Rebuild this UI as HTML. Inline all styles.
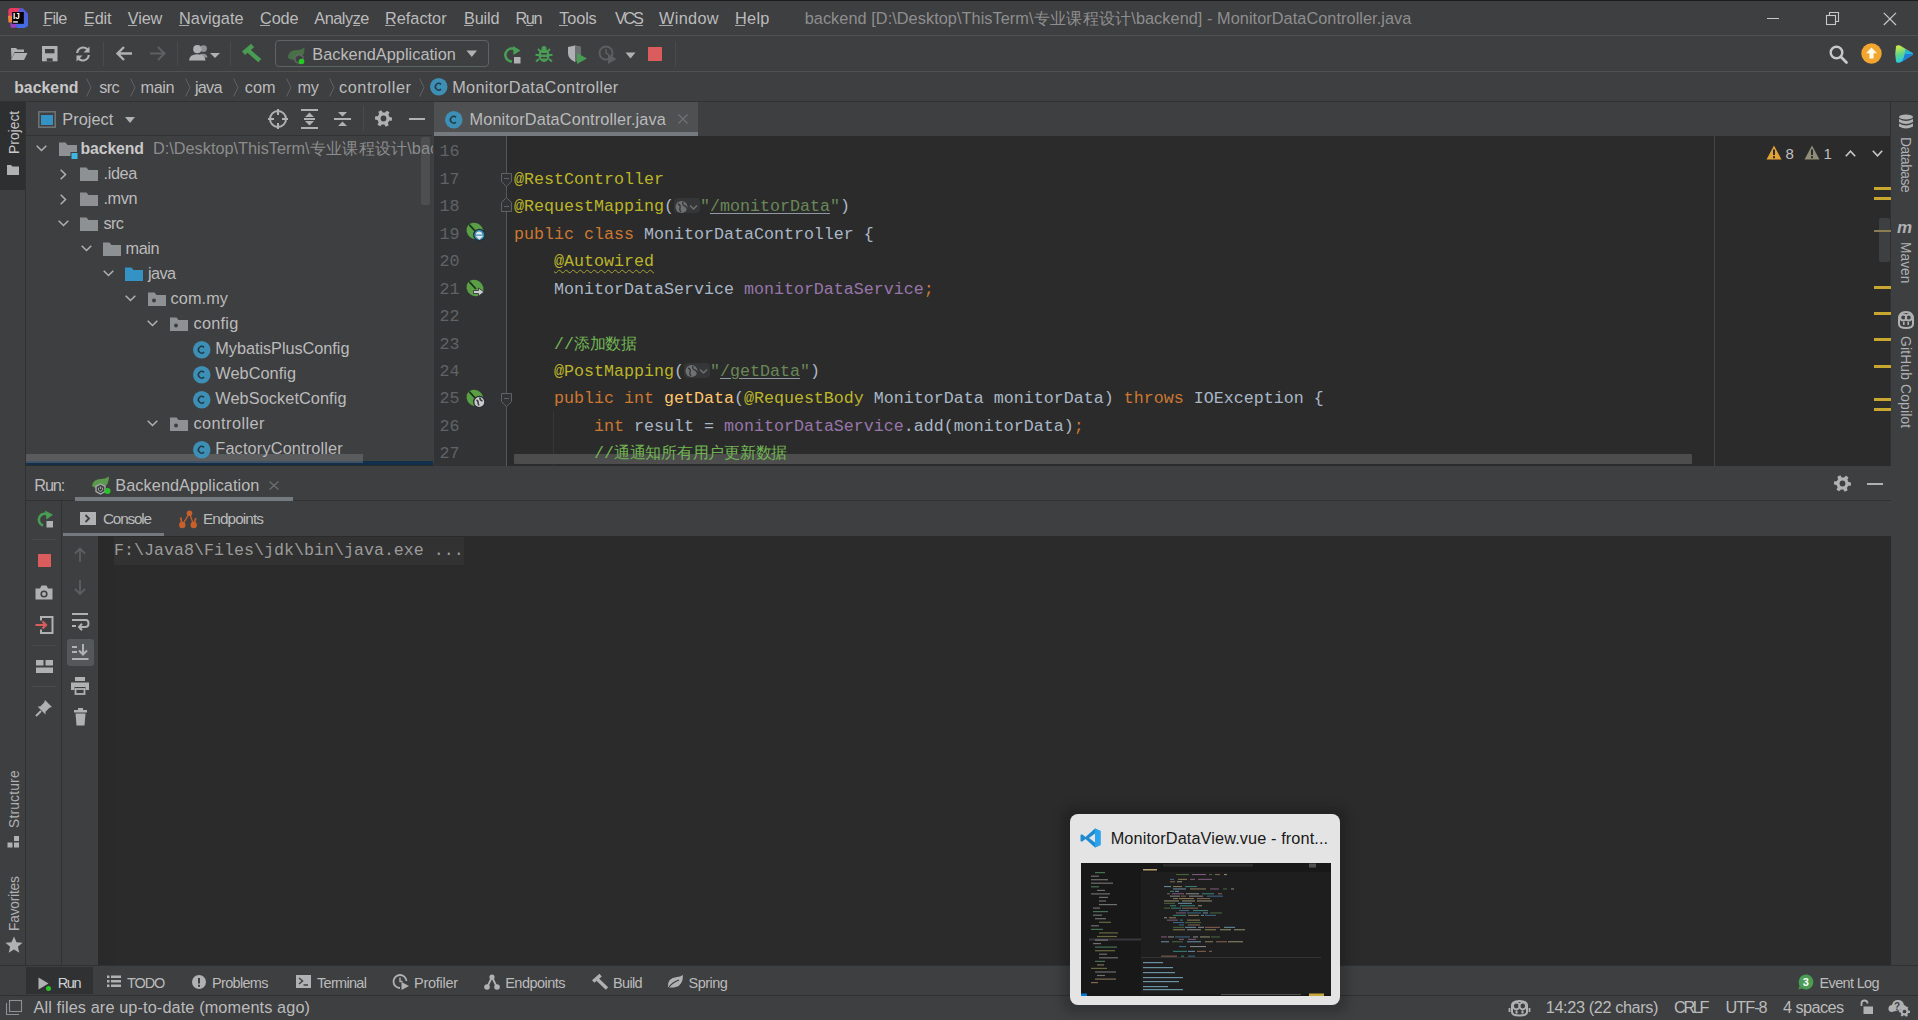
<!DOCTYPE html>
<html><head><meta charset="utf-8">
<style>
*{margin:0;padding:0;box-sizing:border-box}
html,body{width:1918px;height:1020px;overflow:hidden;background:#3e3f41;font-family:"Liberation Sans",sans-serif;color:#bbbbbb;position:relative}
.a{position:absolute}
.t{position:absolute;white-space:nowrap}
.cj{display:inline-block;text-align:center;letter-spacing:0;text-indent:0}
svg{position:absolute;overflow:visible}
</style></head><body>
<div class="a" style="left:0px;top:0px;width:1918px;height:1020px;background:#3e3f41;"></div>
<div class="a" style="left:0px;top:0px;width:1918px;height:1px;background:#1c1c1c;"></div>
<div class="a" style="left:0px;top:35px;width:1918px;height:1px;background:#515151;"></div>
<div class="a" style="left:0px;top:71px;width:1918px;height:1px;background:#515151;"></div>
<div class="a" style="left:0px;top:101px;width:1918px;height:1px;background:#323232;"></div>
<svg style="left:7px;top:7px" width="22" height="22" viewBox="0 0 22 22">
<defs><linearGradient id="ijb" x1="0" y1="0" x2="0" y2="1"><stop offset="0" stop-color="#5b58d8"/><stop offset="1" stop-color="#3f6fe6"/></linearGradient></defs>
<path d="M1.3 3 Q1.8 1 4 1 L12.5 1 L14.5 4.5 L6 12 L1.3 10.5 Z" fill="#e83a62"/>
<path d="M12.5 1.5 L15.5 1 L21 6.5 L21 19 L17.5 21 L10 21 L7 16 Z" fill="url(#ijb)"/>
<path d="M1 9 L5 8.5 L5.5 15.5 L1.5 15.5 Z" fill="#f0853a"/>
<path d="M3 16.5 L9 16 L9.5 20.5 L4 21 Z" fill="#9b3fc2"/>
<rect x="5.2" y="5" width="11.6" height="11.8" fill="#000"/>
<text x="5.9" y="12.1" font-family="Liberation Sans" font-weight="bold" font-size="8.2" fill="#fff">IJ</text>
<rect x="6.1" y="14.2" width="4.8" height="1.5" fill="#ddd"/>
</svg>
<div class="t" style="left:43.20px;top:8.25px;font-size:16.30px;line-height:21px;color:#bbbbbb;font-family:'Liberation Sans',sans-serif;letter-spacing:-0.689px;">File</div>
<div class="a" style="left:43.2px;top:25px;width:7.8px;height:1px;background:#a8a8a8;"></div>
<div class="t" style="left:84.00px;top:8.25px;font-size:16.30px;line-height:21px;color:#bbbbbb;font-family:'Liberation Sans',sans-serif;letter-spacing:-0.163px;">Edit</div>
<div class="a" style="left:84.0px;top:25px;width:9.1px;height:1px;background:#a8a8a8;"></div>
<div class="t" style="left:127.80px;top:8.25px;font-size:16.30px;line-height:21px;color:#bbbbbb;font-family:'Liberation Sans',sans-serif;letter-spacing:-0.144px;">View</div>
<div class="a" style="left:127.8px;top:25px;width:9.1px;height:1px;background:#a8a8a8;"></div>
<div class="t" style="left:179.00px;top:8.25px;font-size:16.30px;line-height:21px;color:#bbbbbb;font-family:'Liberation Sans',sans-serif;letter-spacing:0.038px;">Navigate</div>
<div class="a" style="left:179.0px;top:25px;width:10.0px;height:1px;background:#a8a8a8;"></div>
<div class="t" style="left:260.00px;top:8.25px;font-size:16.30px;line-height:21px;color:#bbbbbb;font-family:'Liberation Sans',sans-serif;letter-spacing:-0.123px;">Code</div>
<div class="a" style="left:260.0px;top:25px;width:9.9px;height:1px;background:#a8a8a8;"></div>
<div class="t" style="left:314.30px;top:8.25px;font-size:16.30px;line-height:21px;color:#bbbbbb;font-family:'Liberation Sans',sans-serif;letter-spacing:-0.465px;">Analyze</div>
<div class="a" style="left:353.1px;top:25px;width:6.6px;height:1px;background:#a8a8a8;"></div>
<div class="t" style="left:384.90px;top:8.25px;font-size:16.30px;line-height:21px;color:#bbbbbb;font-family:'Liberation Sans',sans-serif;letter-spacing:0.028px;">Refactor</div>
<div class="a" style="left:384.9px;top:25px;width:10.0px;height:1px;background:#a8a8a8;"></div>
<div class="t" style="left:463.90px;top:8.25px;font-size:16.30px;line-height:21px;color:#bbbbbb;font-family:'Liberation Sans',sans-serif;letter-spacing:-0.112px;">Build</div>
<div class="a" style="left:463.9px;top:25px;width:9.1px;height:1px;background:#a8a8a8;"></div>
<div class="t" style="left:515.40px;top:8.25px;font-size:16.30px;line-height:21px;color:#bbbbbb;font-family:'Liberation Sans',sans-serif;letter-spacing:-1.401px;">Run</div>
<div class="a" style="left:526.1px;top:25px;width:7.0px;height:1px;background:#a8a8a8;"></div>
<div class="t" style="left:559.30px;top:8.25px;font-size:16.30px;line-height:21px;color:#bbbbbb;font-family:'Liberation Sans',sans-serif;letter-spacing:-0.140px;">Tools</div>
<div class="a" style="left:559.3px;top:25px;width:8.3px;height:1px;background:#a8a8a8;"></div>
<div class="t" style="left:614.90px;top:8.25px;font-size:16.30px;line-height:21px;color:#bbbbbb;font-family:'Liberation Sans',sans-serif;letter-spacing:-2.258px;">VCS</div>
<div class="a" style="left:634.5px;top:25px;width:8.0px;height:1px;background:#a8a8a8;"></div>
<div class="t" style="left:659.00px;top:8.25px;font-size:16.30px;line-height:21px;color:#bbbbbb;font-family:'Liberation Sans',sans-serif;letter-spacing:0.345px;">Window</div>
<div class="a" style="left:659.0px;top:25px;width:13.5px;height:1px;background:#a8a8a8;"></div>
<div class="t" style="left:735.00px;top:8.25px;font-size:16.30px;line-height:21px;color:#bbbbbb;font-family:'Liberation Sans',sans-serif;letter-spacing:0.292px;">Help</div>
<div class="a" style="left:735.0px;top:25px;width:10.3px;height:1px;background:#a8a8a8;"></div>
<div class="t" style="left:804.70px;top:8.25px;font-size:16.30px;line-height:21px;color:#8e8e8e;font-family:'Liberation Sans',sans-serif;letter-spacing:0.059px;">backend [D:\Desktop\ThisTerm\<span class="cj" style="width:16.30px">专</span><span class="cj" style="width:16.30px">业</span><span class="cj" style="width:16.30px">课</span><span class="cj" style="width:16.30px">程</span><span class="cj" style="width:16.30px">设</span><span class="cj" style="width:16.30px">计</span>\backend] - MonitorDataController.java</div>
<div class="a" style="left:1767px;top:18px;width:12px;height:1px;background:#c8c8c8;"></div>
<svg style="left:1825px;top:11px" width="15" height="15" viewBox="0 0 15 15"><rect x="1.5" y="4.5" width="9" height="9" fill="none" stroke="#c8c8c8" stroke-width="1.1"/><path d="M4.5 4.5 V1.5 H13.5 V10.5 H10.5" fill="none" stroke="#c8c8c8" stroke-width="1.1"/></svg>
<svg style="left:1883px;top:12px" width="14" height="14" viewBox="0 0 14 14"><path d="M0.8 0.8 L13 13 M13 0.8 L0.8 13" stroke="#c8c8c8" stroke-width="1.2"/></svg>
<svg style="left:10px;top:46px" width="18" height="15" viewBox="0 0 18 15"><path d="M1 2 H6 L7.5 3.5 H14 V6 H4.5 L1.5 13 Z" fill="#afb1b3"/><path d="M4.5 7 H17.5 L14 14 H1 Z" fill="#afb1b3"/></svg>
<svg style="left:42px;top:46px" width="16" height="16" viewBox="0 0 16 16"><rect x="0" y="0" width="15.5" height="15.3" fill="#afb1b3"/><rect x="3" y="3" width="9.5" height="4.3" fill="#3e3f41"/><rect x="4.8" y="12.3" width="5.8" height="3" fill="#3e3f41"/></svg>
<svg style="left:74px;top:45px" width="18" height="18" viewBox="0 0 18 18"><path d="M3.2 8 A6 6 0 0 1 14 5" fill="none" stroke="#afb1b3" stroke-width="2.2"/><path d="M15.5 1.5 V7.5 H9.5 Z" fill="#afb1b3"/><path d="M14.8 10 A6 6 0 0 1 4 13" fill="none" stroke="#afb1b3" stroke-width="2.2"/><path d="M2.5 16.5 V10.5 H8.5 Z" fill="#afb1b3"/></svg>
<div class="a" style="left:103px;top:42px;width:1px;height:24px;background:#4a4a4a;"></div>
<svg style="left:115px;top:45px" width="18" height="17" viewBox="0 0 18 17"><path d="M17 8.5 H3 M9 2 L2.5 8.5 L9 15" fill="none" stroke="#afb1b3" stroke-width="2.4"/></svg>
<svg style="left:149px;top:45px" width="18" height="17" viewBox="0 0 18 17"><path d="M1 8.5 H15 M9 2 L15.5 8.5 L9 15" fill="none" stroke="#5d6062" stroke-width="2"/></svg>
<div class="a" style="left:177px;top:42px;width:1px;height:24px;background:#4a4a4a;"></div>
<svg style="left:189px;top:44px" width="33" height="18" viewBox="0 0 33 18"><circle cx="14.5" cy="4.6" r="3.4" fill="#8f9294"/><path d="M11 10 Q18 8.5 18.5 13.5 L13 13.5 Z" fill="#8f9294"/><circle cx="8.3" cy="5.2" r="4.1" fill="#afb1b3"/><path d="M0 16.5 Q0.5 10.3 8.3 10.3 Q16 10.3 16.5 16.5 Z" fill="#afb1b3"/><path d="M21 9 H31 L26 14 Z" fill="#afb1b3"/></svg>
<div class="a" style="left:230px;top:42px;width:1px;height:24px;background:#4a4a4a;"></div>
<svg style="left:242px;top:44px" width="20" height="20" viewBox="0 0 20 20"><path d="M1.5 9.2 L10.6 1.6" stroke="#499c54" stroke-width="4.6"/><path d="M5.8 6.2 L17.8 16.6" stroke="#499c54" stroke-width="4.4"/></svg>
<div class="a" style="left:275px;top:40px;width:214px;height:27px;border:1.5px solid #5e6366;border-radius:4px"></div>
<svg style="left:287px;top:47px" width="22" height="18" viewBox="0 0 22 18"><path d="M1 11 Q1 3 10 3 Q14 3 17.5 0.5 Q18 10 11 12.5 Q5 14 1 11 Z" fill="#4a6e48"/><path d="M12 7.5 L16 9.8 V14.2 L12 16.5 L8 14.2 V9.8 Z" fill="#3e3f41" stroke="#66696b" stroke-width="1.3"/><circle cx="14.5" cy="14.5" r="2.8" fill="#22cc22"/></svg>
<div class="t" style="left:312.30px;top:43.85px;font-size:16.30px;line-height:21px;color:#bbbbbb;font-family:'Liberation Sans',sans-serif;letter-spacing:0.031px;">BackendApplication</div>
<svg style="left:466px;top:50px" width="12" height="8" viewBox="0 0 12 8"><path d="M0.5 0.5 H11 L5.75 7 Z" fill="#afb1b3"/></svg>
<svg style="left:503px;top:45px" width="19" height="19" viewBox="0 0 19 19"><path d="M14 6 A6.5 6.5 0 1 0 9 16.5" fill="none" stroke="#499c54" stroke-width="2.6"/><path d="M10 1 L17.5 5.5 L10.5 10 Z" fill="#499c54"/><rect x="11" y="12" width="6.5" height="6.5" fill="#afb1b3"/></svg>
<svg style="left:535px;top:45px" width="18" height="18" viewBox="0 0 18 18"><ellipse cx="9" cy="10.5" rx="5.5" ry="6.5" fill="#499c54"/><path d="M3 4 L6 7 M15 4 L12 7 M0.5 10 H4 M17.5 10 H14 M1 16.5 L4 14 M17 16.5 L14 14" stroke="#499c54" stroke-width="2"/><rect x="6" y="8" width="6" height="1.5" fill="#3e3f41"/><rect x="6" y="12" width="6" height="1.5" fill="#3e3f41"/><circle cx="9" cy="3.5" r="2.5" fill="#499c54"/></svg>
<svg style="left:567px;top:45px" width="21" height="19" viewBox="0 0 21 19"><path d="M1 2 L8 0.5 L14 2 V8 Q14 14 8 17 Q1 14 1 8 Z" fill="#afb1b3"/><path d="M8 0.5 L14 2 V8 Q14 14 8 17 Z" fill="#6b6e70"/><path d="M10 8 L20 13.5 L10 19 Z" fill="#499c54"/></svg>
<svg style="left:598px;top:45px" width="19" height="19" viewBox="0 0 19 19"><circle cx="8" cy="8" r="6.5" fill="none" stroke="#5c5f61" stroke-width="2"/><path d="M8 4 V8 L10.5 9.5" stroke="#5c5f61" stroke-width="1.6" fill="none"/><path d="M10 9 L18.5 14 L10 19 Z" fill="#5c5f61"/></svg>
<svg style="left:625px;top:52px" width="11" height="7" viewBox="0 0 11 7"><path d="M0.5 0.5 H10.5 L5.5 6.5 Z" fill="#afb1b3"/></svg>
<div class="a" style="left:648px;top:47px;width:14px;height:14px;background:#db5c5c;"></div>
<div class="a" style="left:675px;top:42px;width:1px;height:25px;background:#4a4a4a;"></div>
<svg style="left:1829px;top:45px" width="20" height="19" viewBox="0 0 20 19"><circle cx="7.5" cy="7.5" r="5.8" fill="none" stroke="#c8c8c8" stroke-width="2.4"/><path d="M11.8 11.8 L17.5 17.5" stroke="#c8c8c8" stroke-width="2.8" stroke-linecap="round"/></svg>
<svg style="left:1861px;top:43px" width="21" height="21" viewBox="0 0 21 21"><circle cx="10.5" cy="10.5" r="10.2" fill="#f2a52f"/><path d="M10.5 4.5 L16 10.3 H12.6 V15.5 H8.4 V10.3 H5 Z" fill="#fffbe6"/></svg>
<svg style="left:1894px;top:44px" width="20" height="20" viewBox="0 0 20 20"><defs><linearGradient id="tbg" x1="0" y1="0" x2="0.3" y2="1"><stop offset="0" stop-color="#e8f03a"/><stop offset="0.55" stop-color="#5fd48a"/><stop offset="1" stop-color="#1ec8ef"/></linearGradient></defs><path d="M2 2.5 Q3 0.5 6 1.5 L18.5 9 Q19.8 10 18.5 11 L6 18.5 Q3 19.5 2 17.5 Q0.5 10 2 2.5 Z" fill="url(#tbg)"/><path d="M11 5.5 L18.5 9 Q19.8 10 18.5 11 L8 18 Q11.5 10 11 5.5 Z" fill="#1f7fd6"/><path d="M11 5.5 L18.5 9 Q19.8 10 18.5 10 L11 10 Z" fill="#25b6d8"/></svg>
<div class="t" style="left:14.20px;top:77.42px;font-size:15.80px;line-height:21px;color:#c8c8c8;font-family:'Liberation Sans',sans-serif;font-weight:bold;letter-spacing:0.033px;">backend</div>
<div class="t" style="left:99.30px;top:77.25px;font-size:16.30px;line-height:21px;color:#bbbbbb;font-family:'Liberation Sans',sans-serif;letter-spacing:-0.664px;">src</div>
<div class="t" style="left:140.60px;top:77.25px;font-size:16.30px;line-height:21px;color:#bbbbbb;font-family:'Liberation Sans',sans-serif;letter-spacing:-0.444px;">main</div>
<div class="t" style="left:195.00px;top:77.25px;font-size:16.30px;line-height:21px;color:#bbbbbb;font-family:'Liberation Sans',sans-serif;letter-spacing:-0.801px;">java</div>
<div class="t" style="left:244.70px;top:77.25px;font-size:16.30px;line-height:21px;color:#bbbbbb;font-family:'Liberation Sans',sans-serif;letter-spacing:0.103px;">com</div>
<div class="t" style="left:297.50px;top:77.25px;font-size:16.30px;line-height:21px;color:#bbbbbb;font-family:'Liberation Sans',sans-serif;letter-spacing:-0.229px;">my</div>
<div class="t" style="left:339.00px;top:77.25px;font-size:16.30px;line-height:21px;color:#bbbbbb;font-family:'Liberation Sans',sans-serif;letter-spacing:0.551px;">controller</div>
<svg style="left:86px;top:78px" width="6" height="19" viewBox="0 0 6 19"><path d="M0.6 0.5 L5 9.5 L0.6 18.5" fill="none" stroke="#5f6265" stroke-width="1"/></svg>
<svg style="left:130px;top:78px" width="6" height="19" viewBox="0 0 6 19"><path d="M0.6 0.5 L5 9.5 L0.6 18.5" fill="none" stroke="#5f6265" stroke-width="1"/></svg>
<svg style="left:185px;top:78px" width="6" height="19" viewBox="0 0 6 19"><path d="M0.6 0.5 L5 9.5 L0.6 18.5" fill="none" stroke="#5f6265" stroke-width="1"/></svg>
<svg style="left:233px;top:78px" width="6" height="19" viewBox="0 0 6 19"><path d="M0.6 0.5 L5 9.5 L0.6 18.5" fill="none" stroke="#5f6265" stroke-width="1"/></svg>
<svg style="left:286px;top:78px" width="6" height="19" viewBox="0 0 6 19"><path d="M0.6 0.5 L5 9.5 L0.6 18.5" fill="none" stroke="#5f6265" stroke-width="1"/></svg>
<svg style="left:329px;top:78px" width="6" height="19" viewBox="0 0 6 19"><path d="M0.6 0.5 L5 9.5 L0.6 18.5" fill="none" stroke="#5f6265" stroke-width="1"/></svg>
<svg style="left:418.5px;top:78px" width="6" height="19" viewBox="0 0 6 19"><path d="M0.6 0.5 L5 9.5 L0.6 18.5" fill="none" stroke="#5f6265" stroke-width="1"/></svg>
<svg style="left:429.5px;top:78px" width="17.5" height="17.5" viewBox="0 0 17.5 17.5"><circle cx="8.75" cy="8.75" r="8.75" fill="#3d8fb5"/><path d="M11.05 6.35 A3.325 3.325 0 1 0 11.05 11.15" fill="none" stroke="#1f3b4a" stroke-width="1.5"/></svg>
<div class="t" style="left:452.20px;top:77.05px;font-size:16.30px;line-height:21px;color:#bbbbbb;font-family:'Liberation Sans',sans-serif;letter-spacing:0.338px;">MonitorDataController</div>
<div class="a" style="left:25px;top:102px;width:1px;height:864px;background:#2f3133;"></div>
<div class="a" style="left:0px;top:102px;width:25px;height:88px;background:#2d2f31;"></div>
<div class="t" style="left:7.51px;top:154.00px;font-size:13.80px;line-height:13.80px;color:#c8c8c8;letter-spacing:0.041px;transform-origin:0 0;transform:rotate(-90deg)">Project</div>
<svg style="left:6px;top:164px" width="14" height="12" viewBox="0 0 14 12"><path d="M1 1 H5 L6.5 2.5 H13 V11 H1 Z" fill="#afb1b3"/></svg>
<svg style="left:7px;top:835px" width="13" height="14" viewBox="0 0 13 14"><rect x="0.5" y="7.5" width="5" height="5" fill="#afb1b3"/><rect x="7" y="7.5" width="5" height="5" fill="#afb1b3"/><rect x="7" y="1" width="5" height="5" fill="#afb1b3"/></svg>
<div class="t" style="left:8.01px;top:828.40px;font-size:13.80px;line-height:13.80px;color:#afb1b3;letter-spacing:0.201px;transform-origin:0 0;transform:rotate(-90deg)">Structure</div>
<div class="t" style="left:8.01px;top:930.80px;font-size:13.80px;line-height:13.80px;color:#afb1b3;letter-spacing:-0.231px;transform-origin:0 0;transform:rotate(-90deg)">Favorites</div>
<svg style="left:5px;top:936px" width="18" height="18" viewBox="0 0 18 18"><path d="M9 0.5 L11.5 6.3 L17.5 6.8 L12.9 10.8 L14.3 16.8 L9 13.6 L3.7 16.8 L5.1 10.8 L0.5 6.8 L6.5 6.3 Z" fill="#afb1b3"/></svg>
<div class="a" style="left:1890px;top:102px;width:1px;height:864px;background:#2f3133;"></div>
<svg style="left:1898px;top:114px" width="16" height="17" viewBox="0 0 16 17"><ellipse cx="8" cy="3" rx="7" ry="2.6" fill="#afb1b3"/><path d="M1 5 Q8 9 15 5 V8 Q8 12 1 8 Z" fill="#afb1b3"/><path d="M1 9.5 Q8 13.5 15 9.5 V12.5 Q8 16.5 1 12.5 Z" fill="#afb1b3"/></svg>
<div class="t" style="left:1911.69px;top:136.60px;font-size:13.80px;line-height:13.80px;color:#afb1b3;letter-spacing:-0.497px;transform-origin:0 0;transform:rotate(90deg)">Database</div>
<svg style="left:1897px;top:221px" width="17" height="14" viewBox="0 0 17 14"><text x="0" y="12" font-family="Liberation Sans" font-style="italic" font-weight="bold" font-size="17" fill="#afb1b3">m</text></svg>
<div class="t" style="left:1911.69px;top:241.50px;font-size:13.80px;line-height:13.80px;color:#afb1b3;letter-spacing:0.020px;transform-origin:0 0;transform:rotate(90deg)">Maven</div>
<svg style="left:1897px;top:311px" width="18" height="18" viewBox="0 0 18 18"><path d="M2 8 Q2 1 9 1 Q16 1 16 8 V13 Q16 17 9 17 Q2 17 2 13 Z" fill="none" stroke="#afb1b3" stroke-width="2"/><circle cx="6.3" cy="6.5" r="3" fill="none" stroke="#afb1b3" stroke-width="1.8"/><circle cx="11.7" cy="6.5" r="3" fill="none" stroke="#afb1b3" stroke-width="1.8"/><rect x="6" y="11" width="1.6" height="3" fill="#afb1b3"/><rect x="10.4" y="11" width="1.6" height="3" fill="#afb1b3"/></svg>
<div class="t" style="left:1911.69px;top:335.80px;font-size:13.80px;line-height:13.80px;color:#afb1b3;letter-spacing:0.189px;transform-origin:0 0;transform:rotate(90deg)">GitHub Copilot</div>
<div class="a" style="left:432px;top:102px;width:2px;height:364px;background:#3e3f41;"></div>
<div class="a" style="left:26px;top:135px;width:406px;height:1px;background:#323232;"></div>
<svg style="left:38px;top:111px" width="18" height="17" viewBox="0 0 18 17"><rect x="0.8" y="0.8" width="16.4" height="15.4" fill="none" stroke="#6e7275" stroke-width="1.6"/><rect x="3" y="4" width="12" height="10" fill="#3592c4"/></svg>
<div class="t" style="left:62.30px;top:109.35px;font-size:16.30px;line-height:21px;color:#bbbbbb;font-family:'Liberation Sans',sans-serif;letter-spacing:0.045px;">Project</div>
<svg style="left:125px;top:117px" width="10" height="6" viewBox="0 0 10 6"><path d="M0 0 H10 L5 6 Z" fill="#afb1b3"/></svg>
<svg style="left:268px;top:109px" width="20" height="20" viewBox="0 0 20 20"><circle cx="10" cy="10" r="8" fill="none" stroke="#afb1b3" stroke-width="2"/><path d="M10 0 V6 M10 14 V20 M0 10 H6 M14 10 H20" stroke="#afb1b3" stroke-width="2"/></svg>
<svg style="left:301px;top:109px" width="17" height="20" viewBox="0 0 17 20"><path d="M0 1 H17 M0 19 H17" stroke="#afb1b3" stroke-width="2"/><path d="M8.5 3.5 L13 8 H4 Z M8.5 16.5 L13 12 H4 Z" fill="#afb1b3"/><rect x="3" y="9" width="11" height="2" fill="#afb1b3"/></svg>
<svg style="left:334px;top:109px" width="17" height="20" viewBox="0 0 17 20"><path d="M0 10 H17" stroke="#afb1b3" stroke-width="2"/><path d="M8.5 7.5 L13 3 H4 Z M8.5 12.5 L13 17 H4 Z" fill="#afb1b3"/></svg>
<div class="a" style="left:363px;top:106px;width:1px;height:25px;background:#4a4a4a;"></div>
<svg style="left:375px;top:110px" width="17" height="17" viewBox="0 0 17 17"><polygon points="17.00,8.50 16.93,9.61 16.71,10.70 14.15,10.84 13.80,11.56 13.36,12.23 12.83,12.83 13.67,15.24 12.75,15.86 11.75,16.35 10.70,16.71 9.30,14.57 8.50,14.62 7.70,14.57 6.92,14.41 5.25,16.35 4.25,15.86 3.33,15.24 2.49,14.51 3.64,12.23 3.20,11.56 2.85,10.84 2.59,10.08 0.07,9.61 0.00,8.50 0.07,7.39 0.29,6.30 2.85,6.16 3.20,5.44 3.64,4.77 4.17,4.17 3.33,1.76 4.25,1.14 5.25,0.65 6.30,0.29 7.70,2.43 8.50,2.38 9.30,2.43 10.08,2.59 11.75,0.65 12.75,1.14 13.67,1.76 14.51,2.49 13.36,4.77 13.80,5.44 14.15,6.16 14.41,6.92 16.93,7.39" fill="#afb1b3"/><circle cx="8.5" cy="8.5" r="2.89" fill="#3e3f41"/></svg>
<div class="a" style="left:409px;top:118px;width:16px;height:2px;background:#afb1b3;"></div>
<div class="a" style="left:421px;top:137px;width:9px;height:68px;background:#4c4e50;border-radius:2px"></div>
<div class="a" style="left:26px;top:461px;width:407px;height:4px;background:#12304b;"></div>
<div class="a" style="left:26px;top:454px;width:337px;height:9px;background:rgba(128,130,133,0.42);"></div>
<svg style="left:36px;top:145px" width="11" height="7" viewBox="0 0 11 7"><path d="M0.7 0.7 L5.5 5.5 L10.3 0.7" fill="none" stroke="#afb1b3" stroke-width="1.5"/></svg>
<svg style="left:58.5px;top:142px" width="19" height="17" viewBox="0 0 19 17"><path d="M0 0.5 H6.5 L8.5 3 H18 V14 H0 Z" fill="#8d9194"/><rect x="11.5" y="10" width="7" height="7" fill="#3e3f41"/><rect x="12.5" y="11" width="6" height="6" fill="#40b6e0"/></svg>
<div class="t" style="left:80.50px;top:138.42px;font-size:15.80px;line-height:21px;color:#c8c8c8;font-family:'Liberation Sans',sans-serif;font-weight:bold;letter-spacing:-0.101px;">backend</div>
<div class="t" style="left:153.00px;top:138.25px;font-size:16.30px;line-height:21px;color:#8c8c8c;font-family:'Liberation Sans',sans-serif;width:280px;overflow:hidden;">D:\Desktop\ThisTerm\<span class="cj" style="width:16.30px">专</span><span class="cj" style="width:16.30px">业</span><span class="cj" style="width:16.30px">课</span><span class="cj" style="width:16.30px">程</span><span class="cj" style="width:16.30px">设</span><span class="cj" style="width:16.30px">计</span>\backend</div>
<svg style="left:60px;top:168.5px" width="7" height="11" viewBox="0 0 7 11"><path d="M0.7 0.7 L5.5 5.5 L0.7 10.3" fill="none" stroke="#afb1b3" stroke-width="1.5"/></svg>
<svg style="left:80px;top:167px" width="19" height="17" viewBox="0 0 19 17"><path d="M0 0.5 H6.5 L8.5 3 H18 V14 H0 Z" fill="#8d9194"/></svg>
<div class="t" style="left:103.50px;top:163.25px;font-size:16.30px;line-height:21px;color:#bbbbbb;font-family:'Liberation Sans',sans-serif;letter-spacing:-0.362px;">.idea</div>
<svg style="left:60px;top:193.5px" width="7" height="11" viewBox="0 0 7 11"><path d="M0.7 0.7 L5.5 5.5 L0.7 10.3" fill="none" stroke="#afb1b3" stroke-width="1.5"/></svg>
<svg style="left:80px;top:192px" width="19" height="17" viewBox="0 0 19 17"><path d="M0 0.5 H6.5 L8.5 3 H18 V14 H0 Z" fill="#8d9194"/></svg>
<div class="t" style="left:103.50px;top:188.25px;font-size:16.30px;line-height:21px;color:#bbbbbb;font-family:'Liberation Sans',sans-serif;letter-spacing:-0.441px;">.mvn</div>
<svg style="left:57.5px;top:220px" width="11" height="7" viewBox="0 0 11 7"><path d="M0.7 0.7 L5.5 5.5 L10.3 0.7" fill="none" stroke="#afb1b3" stroke-width="1.5"/></svg>
<svg style="left:80px;top:217px" width="19" height="17" viewBox="0 0 19 17"><path d="M0 0.5 H6.5 L8.5 3 H18 V14 H0 Z" fill="#8d9194"/></svg>
<div class="t" style="left:103.50px;top:213.25px;font-size:16.30px;line-height:21px;color:#bbbbbb;font-family:'Liberation Sans',sans-serif;letter-spacing:-0.614px;">src</div>
<svg style="left:81px;top:245px" width="11" height="7" viewBox="0 0 11 7"><path d="M0.7 0.7 L5.5 5.5 L10.3 0.7" fill="none" stroke="#afb1b3" stroke-width="1.5"/></svg>
<svg style="left:103px;top:242px" width="19" height="17" viewBox="0 0 19 17"><path d="M0 0.5 H6.5 L8.5 3 H18 V14 H0 Z" fill="#8d9194"/></svg>
<div class="t" style="left:125.60px;top:238.25px;font-size:16.30px;line-height:21px;color:#bbbbbb;font-family:'Liberation Sans',sans-serif;letter-spacing:-0.477px;">main</div>
<svg style="left:103px;top:270px" width="11" height="7" viewBox="0 0 11 7"><path d="M0.7 0.7 L5.5 5.5 L10.3 0.7" fill="none" stroke="#afb1b3" stroke-width="1.5"/></svg>
<svg style="left:125px;top:267px" width="19" height="17" viewBox="0 0 19 17"><path d="M0 0.5 H6.5 L8.5 3 H18 V14 H0 Z" fill="#3592c4"/></svg>
<div class="t" style="left:148.00px;top:263.25px;font-size:16.30px;line-height:21px;color:#bbbbbb;font-family:'Liberation Sans',sans-serif;letter-spacing:-0.634px;">java</div>
<svg style="left:125.4px;top:295px" width="11" height="7" viewBox="0 0 11 7"><path d="M0.7 0.7 L5.5 5.5 L10.3 0.7" fill="none" stroke="#afb1b3" stroke-width="1.5"/></svg>
<svg style="left:148px;top:292px" width="19" height="17" viewBox="0 0 19 17"><path d="M0 0.5 H6.5 L8.5 3 H18 V14 H0 Z" fill="#8d9194"/><circle cx="6" cy="8.5" r="2" fill="#3e3f41"/></svg>
<div class="t" style="left:170.50px;top:288.25px;font-size:16.30px;line-height:21px;color:#bbbbbb;font-family:'Liberation Sans',sans-serif;letter-spacing:0.090px;">com.my</div>
<svg style="left:147.2px;top:320px" width="11" height="7" viewBox="0 0 11 7"><path d="M0.7 0.7 L5.5 5.5 L10.3 0.7" fill="none" stroke="#afb1b3" stroke-width="1.5"/></svg>
<svg style="left:170px;top:317px" width="19" height="17" viewBox="0 0 19 17"><path d="M0 0.5 H6.5 L8.5 3 H18 V14 H0 Z" fill="#8d9194"/><circle cx="6" cy="8.5" r="2" fill="#3e3f41"/></svg>
<div class="t" style="left:193.50px;top:313.25px;font-size:16.30px;line-height:21px;color:#bbbbbb;font-family:'Liberation Sans',sans-serif;letter-spacing:0.261px;">config</div>
<svg style="left:193px;top:340.5px" width="17.5" height="17.5" viewBox="0 0 17.5 17.5"><circle cx="8.75" cy="8.75" r="8.75" fill="#3d8fb5"/><path d="M11.05 6.35 A3.325 3.325 0 1 0 11.05 11.15" fill="none" stroke="#1f3b4a" stroke-width="1.5"/></svg>
<div class="t" style="left:215.30px;top:338.25px;font-size:16.30px;line-height:21px;color:#bbbbbb;font-family:'Liberation Sans',sans-serif;letter-spacing:-0.043px;">MybatisPlusConfig</div>
<svg style="left:193px;top:365.5px" width="17.5" height="17.5" viewBox="0 0 17.5 17.5"><circle cx="8.75" cy="8.75" r="8.75" fill="#3d8fb5"/><path d="M11.05 6.35 A3.325 3.325 0 1 0 11.05 11.15" fill="none" stroke="#1f3b4a" stroke-width="1.5"/></svg>
<div class="t" style="left:215.30px;top:363.25px;font-size:16.30px;line-height:21px;color:#bbbbbb;font-family:'Liberation Sans',sans-serif;letter-spacing:0.058px;">WebConfig</div>
<svg style="left:193px;top:390.5px" width="17.5" height="17.5" viewBox="0 0 17.5 17.5"><circle cx="8.75" cy="8.75" r="8.75" fill="#3d8fb5"/><path d="M11.05 6.35 A3.325 3.325 0 1 0 11.05 11.15" fill="none" stroke="#1f3b4a" stroke-width="1.5"/></svg>
<div class="t" style="left:215.30px;top:388.25px;font-size:16.30px;line-height:21px;color:#bbbbbb;font-family:'Liberation Sans',sans-serif;letter-spacing:0.081px;">WebSocketConfig</div>
<svg style="left:147.2px;top:420px" width="11" height="7" viewBox="0 0 11 7"><path d="M0.7 0.7 L5.5 5.5 L10.3 0.7" fill="none" stroke="#afb1b3" stroke-width="1.5"/></svg>
<svg style="left:170px;top:417px" width="19" height="17" viewBox="0 0 19 17"><path d="M0 0.5 H6.5 L8.5 3 H18 V14 H0 Z" fill="#8d9194"/><circle cx="6" cy="8.5" r="2" fill="#3e3f41"/></svg>
<div class="t" style="left:193.50px;top:413.25px;font-size:16.30px;line-height:21px;color:#bbbbbb;font-family:'Liberation Sans',sans-serif;letter-spacing:0.451px;">controller</div>
<svg style="left:193px;top:440.5px" width="17.5" height="17.5" viewBox="0 0 17.5 17.5"><circle cx="8.75" cy="8.75" r="8.75" fill="#3d8fb5"/><path d="M11.05 6.35 A3.325 3.325 0 1 0 11.05 11.15" fill="none" stroke="#1f3b4a" stroke-width="1.5"/></svg>
<div class="t" style="left:215.30px;top:438.25px;font-size:16.30px;line-height:21px;color:#bbbbbb;font-family:'Liberation Sans',sans-serif;letter-spacing:0.162px;">FactoryController</div>
<div class="a" style="left:26px;top:465px;width:1865px;height:1px;background:#2a2a2a;"></div>
<div class="a" style="left:434px;top:102px;width:1456px;height:34px;background:#3e3f41;"></div>
<div class="a" style="left:434px;top:102px;width:264px;height:30px;background:#4e5052;"></div>
<div class="a" style="left:434px;top:132px;width:264px;height:4px;background:#747a80;"></div>
<svg style="left:445px;top:111px" width="17.5" height="17.5" viewBox="0 0 17.5 17.5"><circle cx="8.75" cy="8.75" r="8.75" fill="#3d8fb5"/><path d="M11.05 6.35 A3.325 3.325 0 1 0 11.05 11.15" fill="none" stroke="#1f3b4a" stroke-width="1.5"/></svg>
<div class="t" style="left:469.50px;top:108.85px;font-size:16.30px;line-height:21px;color:#bbbbbb;font-family:'Liberation Sans',sans-serif;letter-spacing:0.145px;">MonitorDataController.java</div>
<svg style="left:678px;top:114px" width="10" height="10" viewBox="0 0 10 10"><path d="M0.5 0.5 L9.5 9.5 M9.5 0.5 L0.5 9.5" stroke="#6f7274" stroke-width="1.2"/></svg>
<div class="a" style="left:434px;top:136px;width:1456px;height:330px;background:#2b2b2b;"></div>
<div class="a" style="left:434px;top:136px;width:72px;height:330px;background:#323335;"></div>
<div class="a" style="left:506px;top:136px;width:1px;height:330px;background:#555759;"></div>
<div class="a" style="left:1714px;top:136px;width:1px;height:330px;background:#444444;"></div>
<div class="t" style="left:439.50px;top:141.26px;font-size:16.67px;line-height:22px;color:#606366;font-family:'Liberation Mono',monospace;">16</div>
<div class="t" style="left:439.50px;top:168.73px;font-size:16.67px;line-height:22px;color:#606366;font-family:'Liberation Mono',monospace;">17</div>
<div class="t" style="left:439.50px;top:196.20px;font-size:16.67px;line-height:22px;color:#606366;font-family:'Liberation Mono',monospace;">18</div>
<div class="t" style="left:439.50px;top:223.67px;font-size:16.67px;line-height:22px;color:#606366;font-family:'Liberation Mono',monospace;">19</div>
<div class="t" style="left:439.50px;top:251.14px;font-size:16.67px;line-height:22px;color:#606366;font-family:'Liberation Mono',monospace;">20</div>
<div class="t" style="left:439.50px;top:278.61px;font-size:16.67px;line-height:22px;color:#606366;font-family:'Liberation Mono',monospace;">21</div>
<div class="t" style="left:439.50px;top:306.08px;font-size:16.67px;line-height:22px;color:#606366;font-family:'Liberation Mono',monospace;">22</div>
<div class="t" style="left:439.50px;top:333.55px;font-size:16.67px;line-height:22px;color:#606366;font-family:'Liberation Mono',monospace;">23</div>
<div class="t" style="left:439.50px;top:361.02px;font-size:16.67px;line-height:22px;color:#606366;font-family:'Liberation Mono',monospace;">24</div>
<div class="t" style="left:439.50px;top:388.49px;font-size:16.67px;line-height:22px;color:#606366;font-family:'Liberation Mono',monospace;">25</div>
<div class="t" style="left:439.50px;top:415.96px;font-size:16.67px;line-height:22px;color:#606366;font-family:'Liberation Mono',monospace;">26</div>
<div class="t" style="left:439.50px;top:443.43px;font-size:16.67px;line-height:22px;color:#606366;font-family:'Liberation Mono',monospace;">27</div>
<svg style="left:501px;top:173px" width="11" height="15" viewBox="0 0 11 15"><path d="M0.5 0.5 H10.5 V8.5 L5.5 13.8 L0.5 8.5 Z" fill="#323335" stroke="#5f6265" stroke-width="1"/><path d="M3 5.5 H8" stroke="#5f6265" stroke-width="1"/></svg>
<svg style="left:501px;top:197px" width="11" height="15" viewBox="0 0 11 15"><path d="M5.5 0.5 L10.5 5.5 V14.5 H0.5 V5.5 Z" fill="#323335" stroke="#5f6265" stroke-width="1"/><path d="M3 9.5 H8" stroke="#5f6265" stroke-width="1"/></svg>
<svg style="left:501px;top:392.8px" width="11" height="15" viewBox="0 0 11 15"><path d="M0.5 0.5 H10.5 V8.5 L5.5 13.8 L0.5 8.5 Z" fill="#323335" stroke="#5f6265" stroke-width="1"/><path d="M3 5.5 H8" stroke="#5f6265" stroke-width="1"/></svg>
<svg style="left:466px;top:222px" width="19" height="19" viewBox="0 0 19 19"><ellipse cx="9" cy="9" rx="9" ry="7.8" transform="rotate(38 9 9)" fill="#5a9e45"/><path d="M3.2 2.6 L10 10" stroke="#1c3318" stroke-width="1.7"/><circle cx="13.3" cy="13" r="5.6" fill="#3d8fb5" stroke="#1e3340" stroke-width="1.3"/><path d="M10.5 12.5 Q11 10 13.5 10.2 Q15.5 10.5 15.8 12.5 M10.8 14.3 H16 L13.4 16.8 Z" stroke="#dfe9ef" stroke-width="1.2" fill="#dfe9ef"/></svg>
<svg style="left:466px;top:279px" width="19" height="19" viewBox="0 0 19 19"><ellipse cx="9" cy="9" rx="9" ry="7.8" transform="rotate(38 9 9)" fill="#5a9e45"/><path d="M3.2 2.6 L10 10" stroke="#1c3318" stroke-width="1.7"/><path d="M7.5 11.5 H12.5 V9 L18 13 L12.5 17 V14.5 H7.5 Z" fill="#c9ccce" stroke="#2b2d2f" stroke-width="0.8"/></svg>
<svg style="left:466px;top:388.5px" width="19" height="19" viewBox="0 0 19 19"><ellipse cx="9" cy="9" rx="9" ry="7.8" transform="rotate(38 9 9)" fill="#5a9e45"/><path d="M3.2 2.6 L10 10" stroke="#1c3318" stroke-width="1.7"/><circle cx="13.3" cy="13" r="5.6" fill="#c9ccce" stroke="#2b2d2f" stroke-width="1.3"/><path d="M10.5 11 Q12.5 12 12 14 L13 16.5 M14 8.5 Q13.5 11 16.5 12" stroke="#3a3c3e" stroke-width="1.5" fill="none"/></svg>
<div class="a" style="left:553px;top:411px;width:1px;height:55px;background:#373737;"></div>
<div class="a" style="left:514px;top:454px;width:1178px;height:10px;background:#4d4d4e;border-radius:1px"></div>
<div class="t" style="left:514.00px;top:168.73px;font-size:16.67px;line-height:22px;color:#a9b7c6;font-family:'Liberation Mono',monospace;white-space:pre;"><span style="color:#bbb529;">@RestController</span></div>
<div class="t" style="left:514.00px;top:196.20px;font-size:16.67px;line-height:22px;color:#a9b7c6;font-family:'Liberation Mono',monospace;white-space:pre;"><span style="color:#bbb529;">@RequestMapping</span><span style="color:#a9b7c6;">(</span><span style="display:inline-block;width:26px;height:15px;vertical-align:-2px;background:#353637;border-radius:4px;position:relative"></span><span style="color:#6a8759;">&quot;</span><span style="color:#6a8759;text-decoration:underline;text-decoration-color:#8f99a3;text-underline-offset:2px;text-decoration-thickness:1px">/monitorData</span><span style="color:#6a8759;">&quot;</span><span style="color:#a9b7c6;">)</span></div>
<div class="t" style="left:514.00px;top:223.67px;font-size:16.67px;line-height:22px;color:#a9b7c6;font-family:'Liberation Mono',monospace;white-space:pre;"><span style="color:#cc7832;">public class </span><span style="color:#a9b7c6;">MonitorDataController {</span></div>
<div class="t" style="left:514.00px;top:251.14px;font-size:16.67px;line-height:22px;color:#a9b7c6;font-family:'Liberation Mono',monospace;white-space:pre;">    <span style="color:#bbb529;text-decoration:underline wavy #a8a33a;text-underline-offset:3px;text-decoration-thickness:1px">@Autowired</span></div>
<div class="t" style="left:514.00px;top:278.61px;font-size:16.67px;line-height:22px;color:#a9b7c6;font-family:'Liberation Mono',monospace;white-space:pre;">    <span style="color:#a9b7c6;">MonitorDataService </span><span style="color:#9876aa;">monitorDataService</span><span style="color:#cc7832;">;</span></div>
<div class="t" style="left:514.00px;top:333.55px;font-size:16.67px;line-height:22px;color:#a9b7c6;font-family:'Liberation Mono',monospace;white-space:pre;">    <span style="color:#72b553;">//</span><span style="color:#72b553;font-size:15.75px;letter-spacing:0"><span class="cj" style="width:15.75px">添</span><span class="cj" style="width:15.75px">加</span><span class="cj" style="width:15.75px">数</span><span class="cj" style="width:15.75px">据</span></span></div>
<div class="t" style="left:514.00px;top:361.02px;font-size:16.67px;line-height:22px;color:#a9b7c6;font-family:'Liberation Mono',monospace;white-space:pre;">    <span style="color:#bbb529;">@PostMapping</span><span style="color:#a9b7c6;">(</span><span style="display:inline-block;width:26px;height:15px;vertical-align:-2px;background:#353637;border-radius:4px;position:relative"></span><span style="color:#6a8759;">&quot;</span><span style="color:#6a8759;text-decoration:underline;text-decoration-color:#8f99a3;text-underline-offset:2px;text-decoration-thickness:1px">/getData</span><span style="color:#6a8759;">&quot;</span><span style="color:#a9b7c6;">)</span></div>
<div class="t" style="left:514.00px;top:388.49px;font-size:16.67px;line-height:22px;color:#a9b7c6;font-family:'Liberation Mono',monospace;white-space:pre;">    <span style="color:#cc7832;">public int </span><span style="color:#ffc66d;">getData</span><span style="color:#a9b7c6;">(</span><span style="color:#bbb529;">@RequestBody</span><span style="color:#a9b7c6;"> MonitorData monitorData) </span><span style="color:#cc7832;">throws</span><span style="color:#a9b7c6;"> IOException {</span></div>
<div class="t" style="left:514.00px;top:415.96px;font-size:16.67px;line-height:22px;color:#a9b7c6;font-family:'Liberation Mono',monospace;white-space:pre;">        <span style="color:#cc7832;">int </span><span style="color:#a9b7c6;">result = </span><span style="color:#9876aa;">monitorDataService</span><span style="color:#a9b7c6;">.add(monitorData)</span><span style="color:#cc7832;">;</span></div>
<div class="t" style="left:514.00px;top:443.43px;font-size:16.67px;line-height:22px;color:#a9b7c6;font-family:'Liberation Mono',monospace;white-space:pre;">        <span style="color:#72b553;">//</span><span style="color:#72b553;font-size:15.75px;letter-spacing:0"><span class="cj" style="width:15.75px">通</span><span class="cj" style="width:15.75px">通</span><span class="cj" style="width:15.75px">知</span><span class="cj" style="width:15.75px">所</span><span class="cj" style="width:15.75px">有</span><span class="cj" style="width:15.75px">用</span><span class="cj" style="width:15.75px">户</span><span class="cj" style="width:15.75px">更</span><span class="cj" style="width:15.75px">新</span><span class="cj" style="width:15.75px">数</span><span class="cj" style="width:15.75px">据</span></span></div>
<svg style="left:675px;top:199.64px" width="24" height="14" viewBox="0 0 24 14"><circle cx="6.5" cy="7" r="6" fill="#6e7072"/><path d="M3 4 Q6 5 5 8 Q4 10 6 12 M8 2 Q7 5 10 6 Q12 7 12 9" stroke="#353637" stroke-width="1.4" fill="none"/><path d="M15 5.5 L18.5 9 L22 5.5" stroke="#6e7072" stroke-width="1.5" fill="none"/></svg>
<svg style="left:685px;top:364.46px" width="24" height="14" viewBox="0 0 24 14"><circle cx="6.5" cy="7" r="6" fill="#6e7072"/><path d="M3 4 Q6 5 5 8 Q4 10 6 12 M8 2 Q7 5 10 6 Q12 7 12 9" stroke="#353637" stroke-width="1.4" fill="none"/><path d="M15 5.5 L18.5 9 L22 5.5" stroke="#6e7072" stroke-width="1.5" fill="none"/></svg>
<svg style="left:1766px;top:145px" width="16" height="15" viewBox="0 0 16 15"><path d="M8 0.5 L15.5 14.5 H0.5 Z" fill="#e1a336"/><rect x="7" y="4.5" width="2" height="5.5" fill="#2b2b2b"/><rect x="7" y="11.2" width="2" height="2" fill="#2b2b2b"/></svg>
<div class="t" style="left:1785.50px;top:144.00px;font-size:15.00px;line-height:20px;color:#c0c0c0;font-family:'Liberation Sans',sans-serif;">8</div>
<svg style="left:1804px;top:145px" width="16" height="15" viewBox="0 0 16 15"><path d="M8 0.5 L15.5 14.5 H0.5 Z" fill="#8f8c77"/><rect x="7" y="4.5" width="2" height="5.5" fill="#2b2b2b"/><rect x="7" y="11.2" width="2" height="2" fill="#2b2b2b"/></svg>
<div class="t" style="left:1823.50px;top:144.00px;font-size:15.00px;line-height:20px;color:#c0c0c0;font-family:'Liberation Sans',sans-serif;">1</div>
<svg style="left:1844.5px;top:149.5px" width="11" height="7" viewBox="0 0 11 7"><path d="M0.8 6.2 L5.5 1.2 L10.2 6.2" stroke="#c8c8c8" stroke-width="1.6" fill="none"/></svg>
<svg style="left:1872px;top:149.5px" width="11" height="7" viewBox="0 0 11 7"><path d="M0.8 0.8 L5.5 5.8 L10.2 0.8" stroke="#c8c8c8" stroke-width="1.6" fill="none"/></svg>
<div class="a" style="left:1879px;top:218px;width:11px;height:44px;background:#3d3f41;border-radius:2px"></div>
<div class="a" style="left:1874px;top:187px;width:17px;height:3px;background:#c9a630;"></div>
<div class="a" style="left:1874px;top:197px;width:17px;height:3px;background:#c9a630;"></div>
<div class="a" style="left:1874px;top:286px;width:17px;height:3px;background:#c9a630;"></div>
<div class="a" style="left:1874px;top:312px;width:17px;height:3px;background:#c9a630;"></div>
<div class="a" style="left:1874px;top:338px;width:17px;height:3px;background:#c9a630;"></div>
<div class="a" style="left:1874px;top:365px;width:17px;height:3px;background:#c9a630;"></div>
<div class="a" style="left:1874px;top:398px;width:17px;height:3px;background:#c9a630;"></div>
<div class="a" style="left:1874px;top:408px;width:17px;height:3px;background:#c9a630;"></div>
<div class="a" style="left:1874px;top:230px;width:17px;height:2px;background:#8a7d52;"></div>
<div class="a" style="left:26px;top:466px;width:1865px;height:500px;background:#3e3f41;"></div>
<div class="a" style="left:26px;top:500px;width:1865px;height:1px;background:#323232;"></div>
<div class="t" style="left:34.30px;top:474.85px;font-size:16.30px;line-height:21px;color:#bbbbbb;font-family:'Liberation Sans',sans-serif;letter-spacing:-1.144px;">Run:</div>
<svg style="left:91px;top:476px" width="20" height="18" viewBox="0 0 20 18"><path d="M1 10 Q2 3 10 3 Q14 3 18 0.5 Q18 9 12 12 Q6 14 1 10 Z" fill="#5b9a4d"/><path d="M9.5 8 L14 10.5 V15.5 L9.5 18 L5 15.5 V10.5 Z" fill="#3e3f41" stroke="#a9abad" stroke-width="1.3"/><path d="M9.5 10.5 V13 M8 11.5 A2.2 2.2 0 1 0 11 11.5" stroke="#a9abad" stroke-width="0.9" fill="none"/><circle cx="16.5" cy="15" r="3" fill="#29c329"/></svg>
<div class="t" style="left:115.30px;top:474.85px;font-size:16.30px;line-height:21px;color:#bbbbbb;font-family:'Liberation Sans',sans-serif;letter-spacing:0.066px;">BackendApplication</div>
<svg style="left:269px;top:481px" width="10" height="9" viewBox="0 0 10 9"><path d="M0.5 0.5 L9.5 8.5 M9.5 0.5 L0.5 8.5" stroke="#6f7274" stroke-width="1.1"/></svg>
<div class="a" style="left:75px;top:497px;width:218px;height:4px;background:#747a80;"></div>
<div class="a" style="left:61px;top:501px;width:1px;height:465px;background:#323232;"></div>
<svg style="left:36px;top:510px" width="18" height="18" viewBox="0 0 18 18"><path d="M13 5.5 A6 6 0 1 0 7 15.5" fill="none" stroke="#499c54" stroke-width="2.6"/><path d="M9 0.5 L17 4.8 L10.5 9.5 Z" fill="#499c54"/><rect x="10.5" y="11" width="6.5" height="6.5" fill="#afb1b3"/></svg>
<div class="a" style="left:32px;top:539px;width:24px;height:1px;background:#4a4a4a;"></div>
<div class="a" style="left:37.5px;top:553.5px;width:13px;height:13px;background:#db5c5c;"></div>
<svg style="left:35px;top:585px" width="18" height="15" viewBox="0 0 18 15"><path d="M0.5 3.5 H5 L6.5 0.5 H11.5 L13 3.5 H17.5 V14.5 H0.5 Z" fill="#afb1b3"/><circle cx="9" cy="9" r="3.6" fill="#3e3f41"/><circle cx="9" cy="9" r="2" fill="#afb1b3"/></svg>
<svg style="left:35px;top:616px" width="19" height="18" viewBox="0 0 19 18"><path d="M6 4.5 V1 H17.5 V17 H6 V13.5" fill="none" stroke="#afb1b3" stroke-width="2"/><path d="M0.5 9 H11 M7.5 5.5 L11 9 L7.5 12.5" stroke="#db5c5c" stroke-width="2.2" fill="none"/></svg>
<div class="a" style="left:32px;top:645px;width:24px;height:1px;background:#4a4a4a;"></div>
<svg style="left:35.5px;top:659.5px" width="17" height="13" viewBox="0 0 17 13"><rect x="0" y="0" width="7.5" height="5.5" fill="#afb1b3"/><rect x="9.5" y="0" width="7.5" height="5.5" fill="#afb1b3"/><rect x="0" y="7.5" width="17" height="5.5" fill="#afb1b3"/></svg>
<div class="a" style="left:32px;top:686px;width:24px;height:1px;background:#4a4a4a;"></div>
<svg style="left:35px;top:699px" width="18" height="18" viewBox="0 0 18 18"><path d="M10 1 L17 8 L14.5 8.8 L10.5 12.8 L10.5 15.5 L2.5 7.5 L5.2 7.5 L9.2 3.5 Z" fill="#afb1b3"/><path d="M6 12 L1 17" stroke="#afb1b3" stroke-width="2"/></svg>
<svg style="left:80px;top:512px" width="16" height="13" viewBox="0 0 16 13"><rect x="0" y="0" width="16" height="13" fill="#afb1b3"/><path d="M5.5 3 L9 6.5 L5.5 10" stroke="#3e3f41" stroke-width="1.8" fill="none"/></svg>
<div class="t" style="left:103.00px;top:508.60px;font-size:15.30px;line-height:20px;color:#bbbbbb;font-family:'Liberation Sans',sans-serif;letter-spacing:-1.189px;">Console</div>
<svg style="left:178px;top:510px" width="20" height="18" viewBox="0 0 20 18"><path d="M11.5 3.2 L4.3 15 M11.5 3.2 L15.7 15" stroke="#c8602c" stroke-width="1.3"/><path d="M4.3 15 L2.6 7.5 M15.7 15 L17.8 8" stroke="#c8602c" stroke-width="1.7"/><circle cx="11.5" cy="3.2" r="2.8" fill="#c8602c"/><circle cx="4.3" cy="15" r="3.2" fill="#c8602c"/><circle cx="15.7" cy="15" r="3.2" fill="#c8602c"/></svg>
<div class="t" style="left:203.00px;top:508.60px;font-size:15.30px;line-height:20px;color:#bbbbbb;font-family:'Liberation Sans',sans-serif;letter-spacing:-0.894px;">Endpoints</div>
<div class="a" style="left:63px;top:533px;width:101px;height:3px;background:#747a80;"></div>
<div class="a" style="left:62px;top:536px;width:36px;height:430px;background:#3e3f41;"></div>
<svg style="left:74px;top:547px" width="12" height="15" viewBox="0 0 12 15"><path d="M6 15 V2 M1 6.5 L6 1.5 L11 6.5" stroke="#5c5f61" stroke-width="1.8" fill="none"/></svg>
<svg style="left:74px;top:580px" width="12" height="16" viewBox="0 0 12 16"><path d="M6 0 V14 M1 9 L6 14 L11 9" stroke="#5c5f61" stroke-width="1.8" fill="none"/></svg>
<svg style="left:72px;top:612px" width="17" height="17" viewBox="0 0 17 17"><path d="M0 2 H16 M0 8 H14 Q16.5 8 16.5 11.5 Q16.5 15 13 15 H8" stroke="#afb1b3" stroke-width="2" fill="none"/><path d="M10 11.8 L7 15 L10 18.2" stroke="#afb1b3" stroke-width="2" fill="none"/><path d="M0 14 H4" stroke="#afb1b3" stroke-width="2"/></svg>
<div class="a" style="left:66.5px;top:639px;width:27.5px;height:27px;background:#55585a;border-radius:3px"></div>
<svg style="left:72px;top:644px" width="17" height="16" viewBox="0 0 17 16"><path d="M0 3 H5 M0 8 H5 M0 15 H16.5" stroke="#afb1b3" stroke-width="2"/><path d="M11 0 V10 M7 6.5 L11 10.5 L15 6.5" stroke="#afb1b3" stroke-width="2" fill="none"/></svg>
<svg style="left:71px;top:677px" width="18" height="18" viewBox="0 0 18 18"><rect x="4" y="0" width="10" height="4" fill="#afb1b3"/><path d="M0 5.5 H18 V13 H14.5 V10 H3.5 V13 H0 Z" fill="#afb1b3"/><rect x="4.5" y="12" width="9" height="5" fill="none" stroke="#afb1b3" stroke-width="1.8"/></svg>
<svg style="left:74px;top:708px" width="13" height="18" viewBox="0 0 13 18"><rect x="0" y="2" width="13" height="2.5" fill="#afb1b3"/><rect x="4" y="0" width="5" height="2.5" fill="#afb1b3"/><path d="M1.5 5.5 H11.5 L10.5 17.5 H2.5 Z" fill="#afb1b3"/></svg>
<div class="a" style="left:98px;top:536px;width:1793px;height:430px;background:#2b2b2b;"></div>
<div class="a" style="left:98px;top:536px;width:16px;height:430px;background:#2a2a2a;"></div>
<div class="a" style="left:114px;top:537px;width:350px;height:28px;background:#323232;"></div>
<div class="t" style="left:114.00px;top:539.86px;font-size:16.67px;line-height:22px;color:#9b9b9b;font-family:'Liberation Mono',monospace;white-space:pre;">F:\Java8\Files\jdk\bin\java.exe ...</div>
<svg style="left:1834px;top:475px" width="17" height="17" viewBox="0 0 17 17"><polygon points="17.00,8.50 16.93,9.61 16.71,10.70 14.15,10.84 13.80,11.56 13.36,12.23 12.83,12.83 13.67,15.24 12.75,15.86 11.75,16.35 10.70,16.71 9.30,14.57 8.50,14.62 7.70,14.57 6.92,14.41 5.25,16.35 4.25,15.86 3.33,15.24 2.49,14.51 3.64,12.23 3.20,11.56 2.85,10.84 2.59,10.08 0.07,9.61 0.00,8.50 0.07,7.39 0.29,6.30 2.85,6.16 3.20,5.44 3.64,4.77 4.17,4.17 3.33,1.76 4.25,1.14 5.25,0.65 6.30,0.29 7.70,2.43 8.50,2.38 9.30,2.43 10.08,2.59 11.75,0.65 12.75,1.14 13.67,1.76 14.51,2.49 13.36,4.77 13.80,5.44 14.15,6.16 14.41,6.92 16.93,7.39" fill="#afb1b3"/><circle cx="8.5" cy="8.5" r="2.89" fill="#3e3f41"/></svg>
<div class="a" style="left:1867px;top:483px;width:16px;height:2px;background:#afb1b3;"></div>
<div class="a" style="left:0px;top:965px;width:1918px;height:1px;background:#2f3133;"></div>
<div class="a" style="left:0px;top:966px;width:1918px;height:29px;background:#3e3f41;"></div>
<div class="a" style="left:26px;top:967px;width:67px;height:27px;background:#2f3133;"></div>
<svg style="left:38px;top:977px" width="14" height="14" viewBox="0 0 14 14"><path d="M0.5 0.5 L10.5 6.5 L0.5 12.5 Z" fill="#afb1b3"/><circle cx="10.5" cy="11.5" r="2.5" fill="#29c329"/></svg>
<div class="t" style="left:57.70px;top:973.77px;font-size:14.50px;line-height:19px;color:#d0d0d0;font-family:'Liberation Sans',sans-serif;letter-spacing:-1.400px;">Run</div>
<svg style="left:107px;top:975px" width="14" height="13" viewBox="0 0 14 13"><rect x="0" y="0.5" width="2.5" height="2.5" fill="#afb1b3"/><rect x="4" y="0.5" width="10" height="2.5" fill="#afb1b3"/><rect x="0" y="5" width="2.5" height="2.5" fill="#afb1b3"/><rect x="4" y="5" width="10" height="2.5" fill="#afb1b3"/><rect x="0" y="9.5" width="2.5" height="2.5" fill="#afb1b3"/><rect x="4" y="9.5" width="10" height="2.5" fill="#afb1b3"/></svg>
<div class="t" style="left:126.90px;top:973.77px;font-size:14.50px;line-height:19px;color:#bbbbbb;font-family:'Liberation Sans',sans-serif;letter-spacing:-1.062px;">TODO</div>
<svg style="left:191.5px;top:975px" width="14" height="14" viewBox="0 0 14 14"><circle cx="7" cy="7" r="7" fill="#afb1b3"/><rect x="6" y="3" width="2" height="5.5" fill="#3e3f41"/><rect x="6" y="9.8" width="2" height="2" fill="#3e3f41"/></svg>
<div class="t" style="left:212.00px;top:973.77px;font-size:14.50px;line-height:19px;color:#bbbbbb;font-family:'Liberation Sans',sans-serif;letter-spacing:-0.678px;">Problems</div>
<svg style="left:296px;top:975px" width="15" height="13" viewBox="0 0 15 13"><rect x="0" y="0" width="15" height="13" fill="#afb1b3"/><path d="M3 3 L6.5 6 L3 9 M7.5 10 H12" stroke="#3e3f41" stroke-width="1.5" fill="none"/></svg>
<div class="t" style="left:317.00px;top:973.77px;font-size:14.50px;line-height:19px;color:#bbbbbb;font-family:'Liberation Sans',sans-serif;letter-spacing:-0.700px;">Terminal</div>
<svg style="left:392.5px;top:974px" width="16" height="16" viewBox="0 0 16 16"><path d="M7 14 A6.5 6.5 0 1 1 13.5 7" stroke="#afb1b3" stroke-width="1.8" fill="none"/><path d="M7 3.5 V7.5 H9.5" stroke="#afb1b3" stroke-width="1.4" fill="none"/><path d="M8.5 8 L16 12 L8.5 16 Z" fill="#afb1b3"/></svg>
<div class="t" style="left:414.00px;top:973.77px;font-size:14.50px;line-height:19px;color:#bbbbbb;font-family:'Liberation Sans',sans-serif;letter-spacing:-0.276px;">Profiler</div>
<svg style="left:484px;top:974px" width="16" height="16" viewBox="0 0 16 16"><path d="M8 3 L3.5 12.5 M8 3 L12.5 12.5" stroke="#afb1b3" stroke-width="1.8"/><circle cx="8" cy="3" r="2.6" fill="#afb1b3"/><circle cx="3" cy="13" r="2.8" fill="#afb1b3"/><circle cx="13" cy="13" r="2.8" fill="#afb1b3"/></svg>
<div class="t" style="left:505.20px;top:973.77px;font-size:14.50px;line-height:19px;color:#bbbbbb;font-family:'Liberation Sans',sans-serif;letter-spacing:-0.512px;">Endpoints</div>
<svg style="left:591.5px;top:974px" width="17" height="17" viewBox="0 0 17 17"><path d="M1.2 7.5 L8.6 1.2" stroke="#afb1b3" stroke-width="3.6"/><path d="M4.8 4.8 L15 14.5" stroke="#afb1b3" stroke-width="3.4"/></svg>
<div class="t" style="left:613.00px;top:973.77px;font-size:14.50px;line-height:19px;color:#bbbbbb;font-family:'Liberation Sans',sans-serif;letter-spacing:-0.661px;">Build</div>
<svg style="left:667px;top:975px" width="16" height="14" viewBox="0 0 16 14"><path d="M1 12 Q0 3 10 2 Q13 2 16 0 Q16 10 9 12 Q4 13 1 12 Z" fill="#afb1b3"/><path d="M2 12 Q6 7 12 5" stroke="#3e3f41" stroke-width="1.2" fill="none"/></svg>
<div class="t" style="left:688.50px;top:973.77px;font-size:14.50px;line-height:19px;color:#bbbbbb;font-family:'Liberation Sans',sans-serif;letter-spacing:-0.503px;">Spring</div>
<svg style="left:1797.5px;top:974px" width="17" height="16" viewBox="0 0 17 16"><path d="M8 0.5 A7.5 7.5 0 1 1 1.5 12 L0.5 15.5 L4 14.2 A7.5 7.5 0 0 1 8 0.5 Z" fill="#499c54"/><text x="4.8" y="12" font-family="Liberation Sans" font-weight="bold" font-size="11" fill="#fff">3</text></svg>
<div class="t" style="left:1819.60px;top:973.77px;font-size:14.50px;line-height:19px;color:#bbbbbb;font-family:'Liberation Sans',sans-serif;letter-spacing:-0.663px;">Event Log</div>
<div class="a" style="left:0px;top:995px;width:1918px;height:1px;background:#2f3133;"></div>
<div class="a" style="left:0px;top:996px;width:1918px;height:24px;background:#3e3f41;"></div>
<svg style="left:6px;top:1000px" width="16" height="15" viewBox="0 0 16 15"><rect x="3.5" y="0.5" width="12" height="11" fill="none" stroke="#8e9193" stroke-width="1.1"/><path d="M0.5 3 V14.5 H13" fill="none" stroke="#8e9193" stroke-width="1.1"/></svg>
<div class="t" style="left:33.50px;top:996.65px;font-size:16.30px;line-height:21px;color:#bbbbbb;font-family:'Liberation Sans',sans-serif;letter-spacing:0.111px;">All files are up-to-date (moments ago)</div>
<svg style="left:1508.5px;top:1000px" width="21" height="16" viewBox="0 0 21 16"><path d="M3 7 Q2 1 10.5 1 Q19 1 18 7 V12 Q18 15.5 10.5 15.5 Q3 15.5 3 12 Z" fill="none" stroke="#afb1b3" stroke-width="2"/><circle cx="7.3" cy="6" r="3.3" fill="none" stroke="#afb1b3" stroke-width="1.8"/><circle cx="13.7" cy="6" r="3.3" fill="none" stroke="#afb1b3" stroke-width="1.8"/><rect x="6.5" y="10.5" width="2" height="3" fill="#afb1b3"/><rect x="12.5" y="10.5" width="2" height="3" fill="#afb1b3"/><path d="M0.5 8 V12 M20.5 8 V12" stroke="#afb1b3" stroke-width="1.8"/></svg>
<div class="t" style="left:1545.80px;top:997.25px;font-size:16.30px;line-height:21px;color:#bbbbbb;font-family:'Liberation Sans',sans-serif;letter-spacing:-0.393px;">14:23 (22 chars)</div>
<div class="t" style="left:1674.00px;top:997.25px;font-size:16.30px;line-height:21px;color:#bbbbbb;font-family:'Liberation Sans',sans-serif;letter-spacing:-2.355px;">CRLF</div>
<div class="t" style="left:1725.50px;top:997.25px;font-size:16.30px;line-height:21px;color:#bbbbbb;font-family:'Liberation Sans',sans-serif;letter-spacing:-0.995px;">UTF-8</div>
<div class="t" style="left:1783.00px;top:997.25px;font-size:16.30px;line-height:21px;color:#bbbbbb;font-family:'Liberation Sans',sans-serif;letter-spacing:-0.577px;">4 spaces</div>
<svg style="left:1859px;top:1000px" width="14" height="14" viewBox="0 0 14 14"><path d="M2.5 6 V3.5 A3 3 0 0 1 8.5 3.5" stroke="#afb1b3" stroke-width="1.8" fill="none"/><rect x="4.5" y="6.5" width="9.5" height="7.5" fill="#afb1b3"/></svg>
<svg style="left:1887.5px;top:999px" width="20" height="18" viewBox="0 0 20 18"><path d="M4 13 Q0 13 0.5 9 Q1 6 4 6 Q5 1 10 1 Q15 1 16 6 Q18.5 6.5 18.5 9" fill="#afb1b3"/><text x="6" y="11" font-family="Liberation Sans" font-weight="bold" font-size="10" fill="#3e3f41">?</text></svg>
<svg style="left:1899px;top:1006px" width="11" height="11" viewBox="0 0 11 11"><polygon points="11.00,5.50 10.95,6.22 10.81,6.92 9.16,7.02 8.93,7.48 8.64,7.91 8.30,8.30 8.85,9.86 8.25,10.26 7.60,10.58 6.92,10.81 6.02,9.43 5.50,9.46 4.98,9.43 4.48,9.33 3.40,10.58 2.75,10.26 2.15,9.86 1.61,9.39 2.36,7.91 2.07,7.48 1.84,7.02 1.67,6.52 0.05,6.22 0.00,5.50 0.05,4.78 0.19,4.08 1.84,3.98 2.07,3.52 2.36,3.09 2.70,2.70 2.15,1.14 2.75,0.74 3.40,0.42 4.08,0.19 4.98,1.57 5.50,1.54 6.02,1.57 6.52,1.67 7.60,0.42 8.25,0.74 8.85,1.14 9.39,1.61 8.64,3.09 8.93,3.52 9.16,3.98 9.33,4.48 10.95,4.78" fill="#afb1b3"/><circle cx="5.5" cy="5.5" r="1.87" fill="#3e3f41"/></svg>
<div class="a" style="left:1062px;top:807px;width:286px;height:206px;border-radius:12px;background:rgba(0,0,0,0.18);filter:blur(5px)"></div>
<div class="a" style="left:1070px;top:814px;width:270px;height:191px;background:#e4e4e4;border-radius:8px"></div>
<svg style="left:1080px;top:828px" width="21" height="20" viewBox="0 0 21 20"><path d="M15 0.5 L20.5 3 V17 L15 19.5 L5.5 11 L2 13.8 L0.5 13 V7 L2 6.2 L5.5 9 Z" fill="#1f8ad2"/><path d="M15 5.5 V14.5 L9 10 Z" fill="#e4e4e4"/><path d="M15 0.5 L20.5 3 V17 L15 19.5 Z" fill="#2aa3ef"/></svg>
<div class="t" style="left:1110.70px;top:828.05px;font-size:16.30px;line-height:21px;color:#1a1a1a;font-family:'Liberation Sans',sans-serif;letter-spacing:0.113px;">MonitorDataView.vue - front...</div>
<div class="a" style="left:1081px;top:863px;width:250px;height:133px;background:#1e1e1e;"></div>
<svg style="left:1081px;top:863px" width="250" height="133" viewBox="0 0 250 133"><rect x="0" y="0" width="250" height="5" fill="#181818"/><rect x="0" y="5" width="6" height="126" fill="#181818"/><rect x="6" y="5" width="54" height="126" fill="#181818"/><rect x="8" y="75.5" width="52" height="2" fill="#37373d"/><rect x="82" y="0.8" width="90" height="3" fill="#2a2a2a"/><rect x="228" y="0.5" width="7" height="4" fill="#505050"/><rect x="14" y="9.0" width="10" height="1.2" fill="#73c991" opacity="0.5"/><rect x="10" y="12.6" width="8" height="1.2" fill="#c5c5c5" opacity="0.5"/><rect x="10" y="16.1" width="17" height="1.2" fill="#c5c5c5" opacity="0.5"/><rect x="10" y="19.6" width="22" height="1.2" fill="#c5c5c5" opacity="0.5"/><rect x="10" y="23.2" width="8" height="1.2" fill="#73c991" opacity="0.5"/><rect x="16" y="26.8" width="8" height="1.2" fill="#c5c5c5" opacity="0.5"/><rect x="10" y="30.3" width="19" height="1.2" fill="#c5c5c5" opacity="0.5"/><rect x="18" y="33.8" width="9" height="1.2" fill="#c5c5c5" opacity="0.5"/><rect x="18" y="37.4" width="7" height="1.2" fill="#c5c5c5" opacity="0.5"/><rect x="18" y="41.0" width="18" height="1.2" fill="#c5c5c5" opacity="0.5"/><rect x="12" y="44.5" width="7" height="1.2" fill="#c5c5c5" opacity="0.5"/><rect x="12" y="48.0" width="15" height="1.2" fill="#73c991" opacity="0.5"/><rect x="12" y="51.6" width="9" height="1.2" fill="#c5c5c5" opacity="0.5"/><rect x="14" y="55.1" width="11" height="1.2" fill="#c5c5c5" opacity="0.5"/><rect x="18" y="58.7" width="12" height="1.2" fill="#b8b86a" opacity="0.5"/><rect x="10" y="62.2" width="8" height="1.2" fill="#c5c5c5" opacity="0.5"/><rect x="10" y="65.8" width="12" height="1.2" fill="#73c991" opacity="0.5"/><rect x="18" y="69.3" width="19" height="1.2" fill="#b8b86a" opacity="0.5"/><rect x="16" y="72.9" width="20" height="1.2" fill="#b8b86a" opacity="0.5"/><rect x="14" y="76.5" width="13" height="1.2" fill="#c5c5c5" opacity="0.5"/><rect x="12" y="80.0" width="8" height="1.2" fill="#c5c5c5" opacity="0.5"/><rect x="14" y="83.5" width="22" height="1.2" fill="#73c991" opacity="0.5"/><rect x="14" y="87.1" width="20" height="1.2" fill="#b8b86a" opacity="0.5"/><rect x="18" y="90.6" width="8" height="1.2" fill="#c5c5c5" opacity="0.5"/><rect x="18" y="94.2" width="19" height="1.2" fill="#c5c5c5" opacity="0.5"/><rect x="14" y="97.8" width="10" height="1.2" fill="#73c991" opacity="0.5"/><rect x="16" y="101.3" width="7" height="1.2" fill="#e2c08d" opacity="0.5"/><rect x="10" y="104.8" width="16" height="1.2" fill="#b8b86a" opacity="0.5"/><rect x="14" y="108.4" width="21" height="1.2" fill="#c5c5c5" opacity="0.5"/><rect x="16" y="111.9" width="8" height="1.2" fill="#c5c5c5" opacity="0.5"/><rect x="14" y="115.5" width="21" height="1.2" fill="#e2c08d" opacity="0.5"/><rect x="10" y="119.0" width="7" height="1.2" fill="#e2c08d" opacity="0.5"/><rect x="60" y="5" width="190" height="4" fill="#181818"/><rect x="62" y="6" width="14" height="1.5" fill="#e2c08d" opacity="0.8"/><rect x="95" y="11.0" width="13" height="1.1" fill="#6a9955" opacity="0.55"/><rect x="111" y="11.0" width="14" height="1.1" fill="#c586c0" opacity="0.55"/><rect x="128" y="11.0" width="3" height="1.1" fill="#6a9955" opacity="0.55"/><rect x="134" y="11.0" width="5" height="1.1" fill="#ce9178" opacity="0.55"/><rect x="143" y="11.0" width="3" height="1.1" fill="#dcdcaa" opacity="0.55"/><rect x="89" y="15.8" width="4" height="1.1" fill="#569cd6" opacity="0.55"/><rect x="97" y="15.8" width="9" height="1.1" fill="#d7ba7d" opacity="0.55"/><rect x="109" y="15.8" width="5" height="1.1" fill="#c586c0" opacity="0.55"/><rect x="117" y="15.8" width="14" height="1.1" fill="#c586c0" opacity="0.55"/><rect x="89" y="18.2" width="5" height="1.1" fill="#ce9178" opacity="0.55"/><rect x="96" y="18.2" width="5" height="1.1" fill="#dcdcaa" opacity="0.55"/><rect x="83" y="23.0" width="7" height="1.1" fill="#9cdcfe" opacity="0.55"/><rect x="92" y="23.0" width="9" height="1.1" fill="#d7ba7d" opacity="0.55"/><rect x="104" y="23.0" width="12" height="1.1" fill="#4ec9b0" opacity="0.55"/><rect x="92" y="25.4" width="13" height="1.1" fill="#9cdcfe" opacity="0.55"/><rect x="109" y="25.4" width="16" height="1.1" fill="#d7ba7d" opacity="0.55"/><rect x="129" y="25.4" width="9" height="1.1" fill="#c586c0" opacity="0.55"/><rect x="142" y="25.4" width="4" height="1.1" fill="#6a9955" opacity="0.55"/><rect x="150" y="25.4" width="3" height="1.1" fill="#dcdcaa" opacity="0.55"/><rect x="89" y="27.8" width="4" height="1.1" fill="#4ec9b0" opacity="0.55"/><rect x="94" y="27.8" width="4" height="1.1" fill="#9cdcfe" opacity="0.55"/><rect x="86" y="30.2" width="3" height="1.1" fill="#ce9178" opacity="0.55"/><rect x="91" y="30.2" width="12" height="1.1" fill="#c586c0" opacity="0.55"/><rect x="105" y="30.2" width="13" height="1.1" fill="#d4d4d4" opacity="0.55"/><rect x="121" y="30.2" width="12" height="1.1" fill="#4ec9b0" opacity="0.55"/><rect x="137" y="30.2" width="4" height="1.1" fill="#ce9178" opacity="0.55"/><rect x="89" y="32.6" width="10" height="1.1" fill="#d4d4d4" opacity="0.55"/><rect x="100" y="32.6" width="5" height="1.1" fill="#ce9178" opacity="0.55"/><rect x="108" y="32.6" width="14" height="1.1" fill="#d4d4d4" opacity="0.55"/><rect x="126" y="32.6" width="16" height="1.1" fill="#569cd6" opacity="0.55"/><rect x="92" y="35.0" width="5" height="1.1" fill="#d7ba7d" opacity="0.55"/><rect x="98" y="35.0" width="15" height="1.1" fill="#d7ba7d" opacity="0.55"/><rect x="116" y="35.0" width="13" height="1.1" fill="#ce9178" opacity="0.55"/><rect x="83" y="37.4" width="15" height="1.1" fill="#dcdcaa" opacity="0.55"/><rect x="101" y="37.4" width="13" height="1.1" fill="#dcdcaa" opacity="0.55"/><rect x="116" y="37.4" width="15" height="1.1" fill="#dcdcaa" opacity="0.55"/><rect x="83" y="39.8" width="11" height="1.1" fill="#6a9955" opacity="0.55"/><rect x="97" y="39.8" width="14" height="1.1" fill="#9cdcfe" opacity="0.55"/><rect x="89" y="42.2" width="6" height="1.1" fill="#4ec9b0" opacity="0.55"/><rect x="99" y="42.2" width="15" height="1.1" fill="#4ec9b0" opacity="0.55"/><rect x="117" y="42.2" width="4" height="1.1" fill="#dcdcaa" opacity="0.55"/><rect x="83" y="44.6" width="6" height="1.1" fill="#6a9955" opacity="0.55"/><rect x="90" y="44.6" width="10" height="1.1" fill="#4ec9b0" opacity="0.55"/><rect x="101" y="44.6" width="16" height="1.1" fill="#ce9178" opacity="0.55"/><rect x="98" y="47.0" width="10" height="1.1" fill="#569cd6" opacity="0.55"/><rect x="112" y="47.0" width="15" height="1.1" fill="#4ec9b0" opacity="0.55"/><rect x="95" y="49.4" width="10" height="1.1" fill="#c586c0" opacity="0.55"/><rect x="106" y="49.4" width="14" height="1.1" fill="#569cd6" opacity="0.55"/><rect x="122" y="49.4" width="5" height="1.1" fill="#9cdcfe" opacity="0.55"/><rect x="129" y="49.4" width="12" height="1.1" fill="#6a9955" opacity="0.55"/><rect x="92" y="51.8" width="13" height="1.1" fill="#4ec9b0" opacity="0.55"/><rect x="107" y="51.8" width="11" height="1.1" fill="#d7ba7d" opacity="0.55"/><rect x="120" y="51.8" width="3" height="1.1" fill="#9cdcfe" opacity="0.55"/><rect x="124" y="51.8" width="11" height="1.1" fill="#569cd6" opacity="0.55"/><rect x="83" y="54.2" width="3" height="1.1" fill="#d4d4d4" opacity="0.55"/><rect x="88" y="54.2" width="7" height="1.1" fill="#d7ba7d" opacity="0.55"/><rect x="86" y="56.6" width="11" height="1.1" fill="#c586c0" opacity="0.55"/><rect x="99" y="56.6" width="3" height="1.1" fill="#4ec9b0" opacity="0.55"/><rect x="106" y="56.6" width="13" height="1.1" fill="#d7ba7d" opacity="0.55"/><rect x="92" y="59.0" width="11" height="1.1" fill="#569cd6" opacity="0.55"/><rect x="104" y="59.0" width="16" height="1.1" fill="#6a9955" opacity="0.55"/><rect x="98" y="61.4" width="5" height="1.1" fill="#569cd6" opacity="0.55"/><rect x="107" y="61.4" width="12" height="1.1" fill="#ce9178" opacity="0.55"/><rect x="92" y="63.8" width="11" height="1.1" fill="#6a9955" opacity="0.55"/><rect x="104" y="63.8" width="11" height="1.1" fill="#9cdcfe" opacity="0.55"/><rect x="117" y="63.8" width="6" height="1.1" fill="#d4d4d4" opacity="0.55"/><rect x="124" y="63.8" width="15" height="1.1" fill="#ce9178" opacity="0.55"/><rect x="143" y="63.8" width="11" height="1.1" fill="#9cdcfe" opacity="0.55"/><rect x="92" y="66.2" width="12" height="1.1" fill="#d7ba7d" opacity="0.55"/><rect x="106" y="66.2" width="14" height="1.1" fill="#d4d4d4" opacity="0.55"/><rect x="124" y="66.2" width="11" height="1.1" fill="#d7ba7d" opacity="0.55"/><rect x="139" y="66.2" width="11" height="1.1" fill="#dcdcaa" opacity="0.55"/><rect x="153" y="66.2" width="11" height="1.1" fill="#dcdcaa" opacity="0.55"/><rect x="80" y="73.4" width="6" height="1.1" fill="#c586c0" opacity="0.55"/><rect x="87" y="73.4" width="6" height="1.1" fill="#d4d4d4" opacity="0.55"/><rect x="94" y="73.4" width="15" height="1.1" fill="#569cd6" opacity="0.55"/><rect x="112" y="73.4" width="5" height="1.1" fill="#d4d4d4" opacity="0.55"/><rect x="119" y="73.4" width="10" height="1.1" fill="#dcdcaa" opacity="0.55"/><rect x="130" y="73.4" width="9" height="1.1" fill="#6a9955" opacity="0.55"/><rect x="98" y="75.8" width="5" height="1.1" fill="#c586c0" opacity="0.55"/><rect x="107" y="75.8" width="8" height="1.1" fill="#c586c0" opacity="0.55"/><rect x="80" y="78.2" width="8" height="1.1" fill="#9cdcfe" opacity="0.55"/><rect x="91" y="78.2" width="11" height="1.1" fill="#6a9955" opacity="0.55"/><rect x="106" y="78.2" width="14" height="1.1" fill="#9cdcfe" opacity="0.55"/><rect x="124" y="78.2" width="8" height="1.1" fill="#d7ba7d" opacity="0.55"/><rect x="135" y="78.2" width="11" height="1.1" fill="#ce9178" opacity="0.55"/><rect x="147" y="78.2" width="15" height="1.1" fill="#dcdcaa" opacity="0.55"/><rect x="98" y="83.0" width="7" height="1.1" fill="#569cd6" opacity="0.55"/><rect x="109" y="83.0" width="16" height="1.1" fill="#d4d4d4" opacity="0.55"/><rect x="92" y="87.8" width="14" height="1.1" fill="#4ec9b0" opacity="0.55"/><rect x="107" y="87.8" width="7" height="1.1" fill="#9cdcfe" opacity="0.55"/><rect x="116" y="87.8" width="9" height="1.1" fill="#ce9178" opacity="0.55"/><rect x="128" y="87.8" width="3" height="1.1" fill="#ce9178" opacity="0.55"/><rect x="80" y="92.6" width="16" height="1.1" fill="#ce9178" opacity="0.55"/><rect x="100" y="92.6" width="3" height="1.1" fill="#4ec9b0" opacity="0.55"/><rect x="107" y="92.6" width="7" height="1.1" fill="#569cd6" opacity="0.55"/><rect x="60" y="94" width="180" height="1" fill="#333"/><rect x="62" y="99" width="20" height="1.2" fill="#9cdcfe" opacity="0.6"/><rect x="62" y="104" width="30" height="1.2" fill="#9cdcfe" opacity="0.6"/><rect x="62" y="109" width="32" height="1.2" fill="#9cdcfe" opacity="0.6"/><rect x="62" y="114" width="40" height="1.2" fill="#9cdcfe" opacity="0.6"/><rect x="62" y="118" width="36" height="1.2" fill="#9cdcfe" opacity="0.6"/><rect x="62" y="123" width="25" height="1.2" fill="#9cdcfe" opacity="0.6"/><rect x="62" y="126" width="40" height="1.2" fill="#9cdcfe" opacity="0.6"/><rect x="0" y="131" width="250" height="2" fill="#181818"/><rect x="0" y="130.5" width="6" height="2.5" fill="#0078d4"/><rect x="228" y="130.5" width="15" height="2.5" fill="#c8a83a"/><rect x="140" y="131" width="80" height="1" fill="#777" opacity="0.6"/></svg>
</body></html>
